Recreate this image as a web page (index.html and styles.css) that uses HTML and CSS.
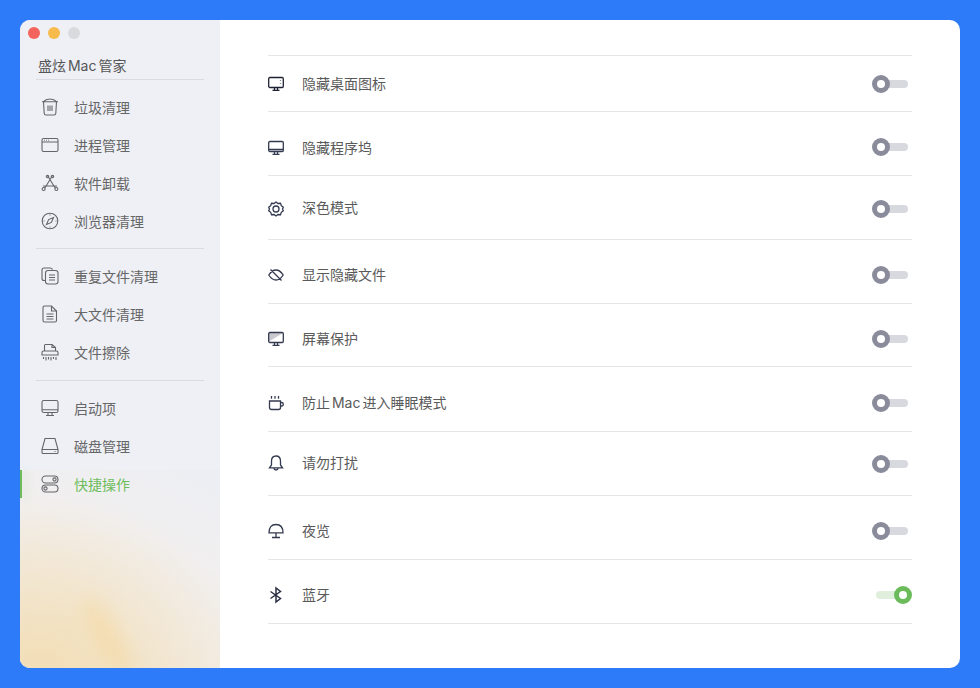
FILE: index.html
```html
<!DOCTYPE html>
<html lang="zh-CN">
<head>
<meta charset="utf-8">
<title>盛炫 Mac 管家</title>
<link rel="stylesheet" href="styles.css">
</head>
<body>
<div class="window">
  <aside class="sidebar">
    <div class="lights"><i class="light red"></i><i class="light yellow"></i><i class="light grey"></i></div>
    <div class="brand">盛炫 Mac 管家</div>
    <nav class="nav">
      <a class="nav-item"><svg class="nav-icon" viewBox="0 0 18 18"><path d="M1 3.800h16M2 3.800Q5 1 9 1t7 2.800M2.500 3.800l.7 11.400q.1 1.800 1.900 1.800h7.800q1.800 0 1.900-1.800l.7-11.400M7 7.500v5.500M9 7.500v5.500M11 7.500v5.500"/></svg>垃圾清理</a>
      <a class="nav-item"><svg class="nav-icon" viewBox="0 0 18 18"><rect x="1" y="2.500" width="16" height="13" rx="1.600"/><path d="M1 6h16M3 4.300h.8M5 4.300h.8M7 4.300h.8"/></svg>进程管理</a>
      <a class="nav-item"><svg class="nav-icon" viewBox="0 0 18 18"><path d="M6.500 1.500 13.500 13M11.500 1.500 4.500 13M2 12h14M4.500 13 3.500 14M13.500 13l1 1"/><circle cx="6.500" cy="2.500" r="1.200"/><circle cx="11.500" cy="2.500" r="1.200"/><circle cx="2.600" cy="15" r="1.500"/><circle cx="15.400" cy="15" r="1.500"/></svg>软件卸载</a>
      <a class="nav-item"><svg class="nav-icon" viewBox="0 0 18 18"><circle cx="9" cy="9" r="7.800"/><path d="M12.500 5.500 10.400 10.400 5.500 12.500 7.600 7.600Z"/><path d="M9 2.500v1M9 14.500v1M2.500 9h1M14.500 9h1"/></svg>浏览器清理</a>
      <hr class="nav-sep">
      <a class="nav-item"><svg class="nav-icon" viewBox="0 0 18 18"><path d="M4 13.500H3q-2 0-2-2V3q0-2 2-2h6q2 0 2.500 1.500"/><rect x="4.500" y="3.500" width="12.500" height="13.500" rx="2.500"/><path d="M8 8h6M8 10.500h6M8 13h6"/></svg>重复文件清理</a>
      <a class="nav-item"><svg class="nav-icon" viewBox="0 0 18 18"><path d="M3.500 1h7l5 5v9.500q0 1.500-1.500 1.500H3.500Q2 17 2 15.500v-13Q2 1 3.500 1Z"/><path d="M10.500 1v5h5M5.500 9h7M5.500 11.500h7M5.500 14h7"/></svg>大文件清理</a>
      <a class="nav-item"><svg class="nav-icon" viewBox="0 0 18 18"><path d="M3.500 8V2.500q0-1 1-1h6.500l3.500 3V8M11 1.500v3h3.500M1 12V9.500Q1 8 2.500 8h13Q17 8 17 9.500V12ZM2.500 14v2M5 14v3.500M7.500 14v2.500M10 14v3.500M12.500 14v2M15 14v3"/></svg>文件擦除</a>
      <hr class="nav-sep nav-sep-b">
      <a class="nav-item"><svg class="nav-icon" viewBox="0 0 18 18"><rect x="1" y="1.500" width="16" height="12" rx="1.800"/><path d="M1 10.800h16M7 13.500v3M11 13.500v3M5 16.500h8"/></svg>启动项</a>
      <a class="nav-item"><svg class="nav-icon" viewBox="0 0 18 18"><path d="M4 1.500h10l3 11v3q0 1-1 1H2q-1 0-1-1v-3ZM1 12.500h16M13.500 14.500h1"/></svg>磁盘管理</a>
      <a class="nav-item active"><svg class="nav-icon" viewBox="0 0 18 18"><rect x="1" y="1" width="16" height="7" rx="3.500"/><circle cx="13.500" cy="4.500" r="1.600"/><rect x="1" y="10" width="16" height="7" rx="3.500"/><circle cx="4.500" cy="13.500" r="1.600"/></svg>快捷操作</a>
    </nav>
  </aside>
  <main class="content">
    <ul class="settings">
      <li class="row row-first">
        <svg class="row-icon" viewBox="0 0 16 16"><rect x=".7" y="1.500" width="14.600" height="10" rx="1.200"/><path d="M4.500 14.300h7M6.500 11.500v2.800M9.500 11.500v2.800M12.500 4v.6M12.500 7v.6"/></svg>
        <span class="row-label">隐藏桌面图标</span><span class="toggle"></span>
      </li>
      <li class="row row-lower">
        <svg class="row-icon soft" viewBox="0 0 16 16"><rect x=".7" y="1.500" width="14.600" height="10" rx="1.200"/><path d="M.7 9.500h14.600M4.500 14.300h7M6.500 11.500v2.800M9.500 11.500v2.800"/></svg>
        <span class="row-label">隐藏程序坞</span><span class="toggle toggle-up"></span>
      </li>
      <li class="row">
        <svg class="row-icon soft gear" viewBox="0 0 16 16"><path d="M8 1 10 2.500l2.500-.2.800 2.400 2 1.500L14.500 8l.8 1.800-2 1.500-.8 2.400-2.500-.2L8 15l-2-1.500-2.500.2-.8-2.400-2-1.500L1.500 8 .7 6.200l2-1.500.8-2.400L6 2.500Z"/><circle cx="8" cy="8" r="3"/></svg>
        <span class="row-label">深色模式</span><span class="toggle toggle-down"></span>
      </li>
      <li class="row row-low">
        <svg class="row-icon soft" viewBox="0 0 16 16"><path d="M.8 8Q4 3 8 3T15.200 8Q12 13 8 13T.8 8ZM2.500 2.500l11 11"/></svg>
        <span class="row-label">显示隐藏文件</span><span class="toggle"></span>
      </li>
      <li class="row row-low row-short">
        <svg class="row-icon soft" viewBox="0 0 16 16"><path class="fill" d="M1 2h14L1 10.500Z"/><rect x=".7" y="1.500" width="14.600" height="10" rx="1.200"/><path d="M4.500 14.300h7M6.500 11.500v2.800M9.500 11.500v2.800"/></svg>
        <span class="row-label">屏幕保护</span><span class="toggle"></span>
      </li>
      <li class="row row-low row-tall">
        <svg class="row-icon soft" viewBox="0 0 16 16"><path d="M1.500 6h11v6.500q0 2-2 2h-7q-2 0-2-2ZM12.500 7.500h1q1.800 0 1.800 1.800T13.500 11h-1M3.500 1v2.800M7 1v2.800M10.500 1v2.800"/></svg>
        <span class="row-label word-tight">防止 Mac 进入睡眠模式</span><span class="toggle"></span>
      </li>
      <li class="row row-up">
        <svg class="row-icon soft" viewBox="0 0 16 16"><path d="M8 1q4.500 0 4.500 5.200V10L14.500 12.800H1.500L3.500 10V6.200Q3.500 1 8 1ZM5.800 13q.3 2 2.200 2t2.200-2"/></svg>
        <span class="row-label">请勿打扰</span><span class="toggle toggle-down"></span>
      </li>
      <li class="row row-low">
        <svg class="row-icon soft" viewBox="0 0 16 16"><path d="M1 9.800Q1 1.500 8 1.500t7 8.300ZM8 9.800v4.700M4 14.500h8"/></svg>
        <span class="row-label">夜览</span><span class="toggle"></span>
      </li>
      <li class="row row-low">
        <svg class="row-icon strong" viewBox="0 0 16 16"><path d="M2.500 4.500l10 7L8 15V1l4.500 3.500-10 7"/></svg>
        <span class="row-label">蓝牙</span><span class="toggle on"></span>
      </li>
    </ul>
  </main>
</div>
</body>
</html>
```
FILE: styles.css
```css
*, *::before, *::after { box-sizing: border-box; }
html, body { height: 100%; }
body {
  margin: 0;
  padding: 20px;
  background: #2d7bf9;
  font-family: "Inter", "Noto Sans CJK SC", sans-serif;
  overflow: hidden;
}
.window {
  display: flex;
  width: 940px;
  height: 648px;
  background: #fff;
  border-radius: 10px;
  overflow: hidden;
}
.sidebar {
  position: relative;
  flex: 0 0 200px;
  padding: 7px 16px 0;
  overflow: hidden;
  background-color: #eef0f6;
  background-image:
    radial-gradient(ellipse 200px 170px at 12% 100%, rgba(243, 222, 180, .9), rgba(243, 222, 180, 0)),
    linear-gradient(205deg, #eceef4 0%, #f1efef 35%, #f2ece4 70%, #efe4d2 100%);
  background-size: 200px 198px;
  background-position: 0 100%;
  background-repeat: no-repeat;
}
.sidebar::after {
  content: "";
  position: absolute;
  left: 74px;
  bottom: -14px;
  width: 26px;
  height: 90px;
  border-radius: 50%;
  background: rgba(245, 212, 145, .4);
  filter: blur(9px);
  transform: rotate(-28deg);
}
.lights { display: flex; gap: 8px; height: 12px; margin-left: -8px; }
.light { width: 12px; height: 12px; border-radius: 50%; }
.red { background: #f4645c; }
.yellow { background: #f6bb4c; }
.grey { background: #d9dade; }
.brand {
  height: 34px;
  margin-top: 7px;
  padding: 10px 0 0 2px;
  border-bottom: 1px solid #d9dbe0;
  color: #555;
  font-size: 14px;
  line-height: 20px;
  word-spacing: -2px;
}
.nav { position: relative; z-index: 1; display: flex; flex-direction: column; padding-top: 8px; }
.nav-item {
  position: relative;
  display: flex;
  align-items: center;
  gap: 15px;
  height: 38px;
  padding-left: 5px;
  color: #666;
  font-size: 14px;
}
.nav-icon {
  flex: none;
  width: 18px;
  height: 18px;
  fill: none;
  stroke: #64656b;
  stroke-width: 1.100;
  overflow: visible;
}
.nav-sep { width: 100%; height: 1px; margin: 8px 0; border: 0; background: #d9dbe0; }
.nav-sep-b { margin: 9px 0 8px; }
.active { color: #6dbd5c; }
.active::before {
  content: "";
  position: absolute;
  left: -16px;
  top: 5px;
  width: 2px;
  height: 28px;
  background: #6dbd5c;
  box-shadow: 3px 0 10px rgba(109, 189, 92, .3);
}
.content { flex: 1; padding: 35px 48px 0; }
.settings {
  margin: 0;
  padding: 0;
  list-style: none;
  border-top: 1px solid #e5e5e5;
}
.row {
  display: flex;
  align-items: center;
  height: 64px;
  border-bottom: 1px solid #e5e5e5;
}
.row-first { height: 56px; }
.row-short { height: 63px; }
.row-tall { height: 65px; }
.row-low { padding-top: 7px; }
.row-lower { padding-top: 8px; }
.row-up { padding-bottom: 1px; }
.row-icon {
  flex: none;
  width: 16px;
  height: 16px;
  fill: none;
  stroke: #1e2233;
  stroke-width: 1.300;
  overflow: visible;
}
.soft { stroke: #343a50; }
.gear { margin-top: 3px; }
.strong { stroke: #2a2f45; stroke-width: 1.500; }
.fill { fill: #c9c9cf; stroke: none; }
.row-label {
  flex: 1;
  margin-left: 18px;
  color: #5a5a5a;
  font-size: 14px;
  line-height: 20px;
}
.word-tight { word-spacing: -2px; }
.toggle {
  position: relative;
  flex: none;
  width: 32px;
  height: 8px;
  margin-right: 4px;
  border-radius: 4px;
  background: #d8d9df;
}
.toggle-up { margin-bottom: 2px; }
.toggle-down { margin-top: 2px; }
.toggle::after {
  content: "";
  position: absolute;
  top: -5px;
  left: -4px;
  width: 18px;
  height: 18px;
  border: 5px solid #8a8b9b;
  border-radius: 50%;
  background: #fff;
}
.toggle.on { background: #e0efdb; }
.toggle.on::after { left: auto; right: -4px; border-color: #6cbb5a; }
```
